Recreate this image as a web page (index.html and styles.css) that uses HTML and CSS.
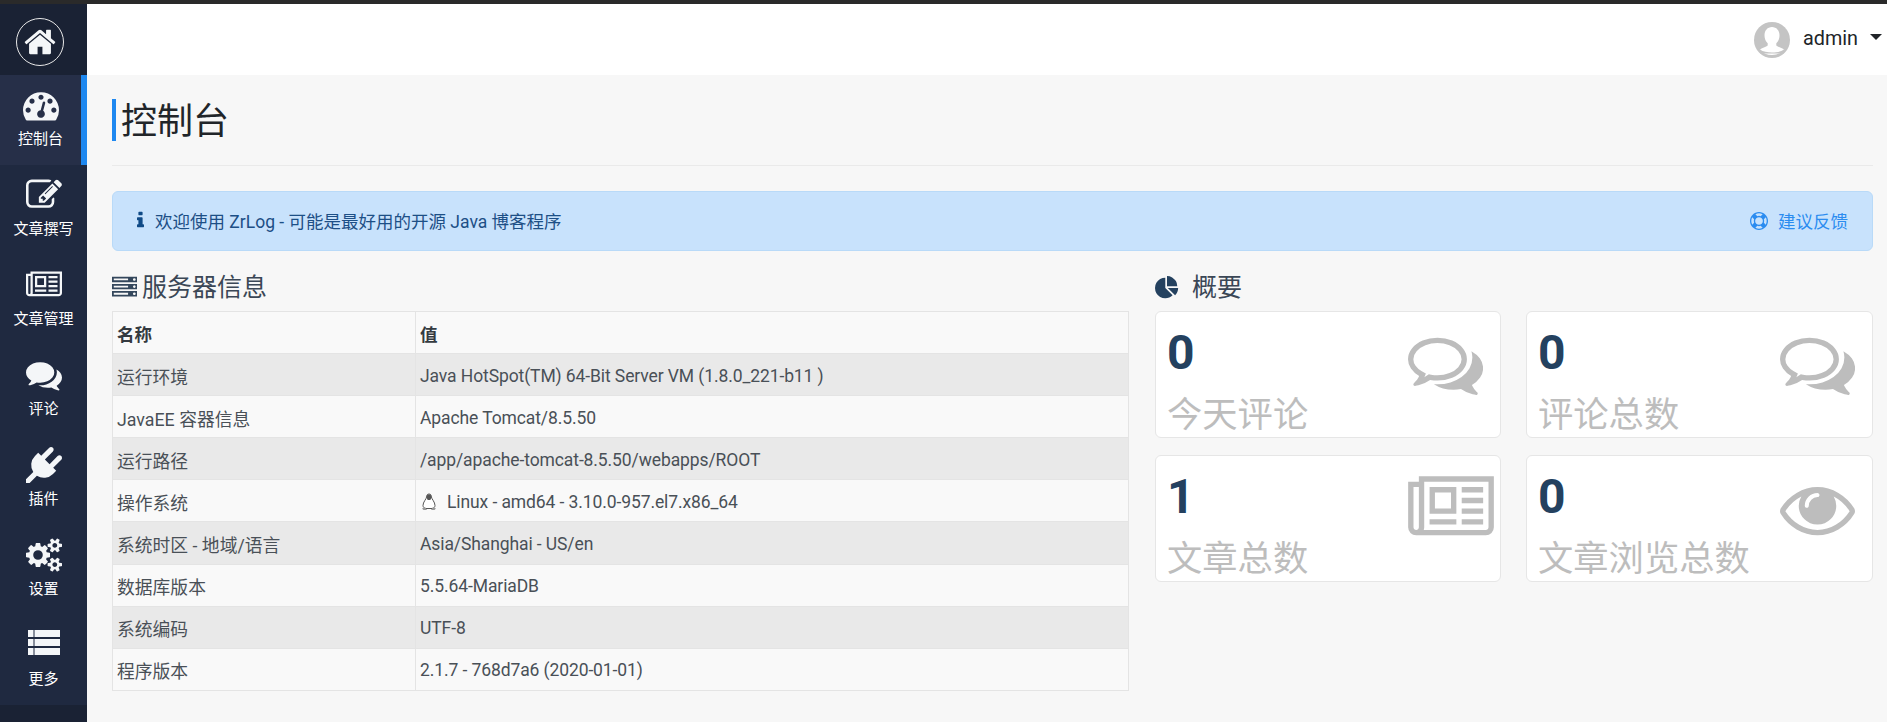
FILE: index.html
```html
<!DOCTYPE html>
<html lang="zh-CN">
<head>
<meta charset="utf-8">
<title>ZrLog 控制台</title>
<link rel="stylesheet" href="styles.css">
</head>
<body>
<div class="strip"></div>
<div class="app">
  <nav class="sidebar">
    <a class="logo"><span class="logo-ring"><svg class="logo-icon" viewBox="0 0 1792 1792"><path d="M1472 992v480q0 26-19 45t-45 19h-384v-384h-256v384h-384q-26 0-45-19t-19-45v-480q0-1 .5-3t.5-3l575-474 575 474q1 2 1 6zm223-69l-62 74q-8 9-21 11h-3q-13 0-21-7l-692-577-692 577q-12 8-24 7-13-2-21-11l-62-74q-8-10-7-23.5t11-21.5l719-599q32-26 76-26t76 26l244 204v-195q0-14 9-23t23-9h192q14 0 23 9t9 23v408l219 182q10 8 11 21.5t-7 23.5z"/></svg></span></a>
    <a class="nav-item active"><svg class="nav-icon" viewBox="0 0 1792 1792"><path d="M384 1152q0-53-37.500-90.500t-90.500-37.500-90.500 37.500-37.500 90.500 37.500 90.500 90.500 37.500 90.500-37.500 37.500-90.500zm192-448q0-53-37.500-90.500t-90.500-37.500-90.500 37.500-37.500 90.500 37.500 90.500 90.500 37.500 90.500-37.500 37.500-90.500zm428 481l101-382q6-26-7.500-48.500t-38.500-29.500-48 6.500-30 39.500l-101 382q-60 5-107 43.500t-63 98.500q-20 77 20 146t117 89 146-20 89-117q16-60-6-117t-72-91zm660-33q0-53-37.500-90.500t-90.500-37.500-90.500 37.500-37.500 90.500 37.500 90.500 90.500 37.500 90.500-37.500 37.500-90.500zm-640-640q0-53-37.500-90.500t-90.500-37.500-90.500 37.500-37.500 90.500 37.500 90.500 90.500 37.500 90.500-37.500 37.500-90.500zm448 192q0-53-37.500-90.500t-90.500-37.500-90.500 37.500-37.500 90.500 37.500 90.500 90.500 37.500 90.500-37.500 37.500-90.500zm320 448q0 261-141 483-19 29-54 29h-1402q-35 0-54-29-141-221-141-483 0-182 71-348t191-286 286-191 348-71 348 71 286 191 191 286 71 348z"/></svg><span>控制台</span></a>
    <a class="nav-item"><svg class="nav-icon" viewBox="0 0 1792 1792"><path d="M888 1184l116-116-152-152-116 116v56h96v96h56zm440-720q-16-16-33 1l-350 350q-17 17-1 33t33-1l350-350q17-17 1-33zm80 594v190q0 119-84.500 203.500t-203.500 84.500h-832q-119 0-203.500-84.500t-84.500-203.500v-832q0-119 84.500-203.500t203.500-84.500h832q63 0 117 25 15 7 18 23 3 17-9 29l-49 49q-14 14-32 8-23-6-45-6h-832q-66 0-113 47t-47 113v832q0 66 47 113t113 47h832q66 0 113-47t47-113v-126q0-13 9-22l64-64q15-15 35-7t20 29zm-96-738l288 288-672 672h-288v-288zm444 132l-92 92-288-288 92-92q28-28 68-28t68 28l152 152q28 28 28 68t-28 68z"/></svg><span>文章撰写</span></a>
    <a class="nav-item"><svg class="nav-icon" viewBox="0 0 2048 1792"><path d="M1024 512h-384v384h384v-384zm128 640v128h-640v-128h640zm0-768v640h-640v-640h640zm640 768v128h-512v-128h512zm0-256v128h-512v-128h512zm0-256v128h-512v-128h512zm0-256v128h-512v-128h512zm-1536 960v-960h-128v960q0 26 19 45t45 19 45-19 19-45zm1664 0v-1088h-1536v1088q0 33-11 64h1483q26 0 45-19t19-45zm128-1216v1216q0 80-56 136t-136 56h-1664q-80 0-136-56t-56-136v-1088h256v-128h1792z"/></svg><span>文章管理</span></a>
    <a class="nav-item"><svg class="nav-icon" viewBox="0 0 1792 1792"><path d="M1408 768q0 139-94 257t-256.500 186.500-353.500 68.500q-86 0-176-16-124 88-278 128-36 9-86 16h-3q-11 0-20.500-8t-11.500-21q-1-3-1-6.500t.5-6.500 2-6l2.500-5 3.500-5.500 4-5 4.500-5 4-4.500q5-6 23-25t26-29.500 22.500-29 25-38.500 20.500-44q-124-72-195-177t-71-224q0-139 94-257t256.500-186.500 353.500-68.500 353.500 68.500 256.500 186.500 94 257zm384 256q0 120-71 224.500t-195 176.500q10 24 20.500 44t25 38.500 22.500 29 26 29.500 23 25q1 1 4 4.500t4.500 5 4 5 3.500 5.500l2.500 5 2 6 .5 6.500-1 6.500q-3 14-13 22t-22 7q-50-7-86-16-154-40-278-128-90 16-176 16-271 0-472-132 58 4 88 4 161 0 309-45t264-129q125-92 192-212t67-254q0-77-23-152 129 71 204 178t75 230z"/></svg><span>评论</span></a>
    <a class="nav-item"><svg class="nav-icon" viewBox="0 0 1792 1792"><path d="M1755 453q37 38 37 90.500t-37 90.500l-401 400 150 150-160 160q-163 163-389.500 186.500t-411.500-100.500l-362 362h-181v-181l362-362q-124-185-100.500-411.500t186.500-389.500l160-160 150 150 400-401q38-37 91-37t90 37 37 90.500-37 90.500l-400 401 234 234 401-400q38-37 91-37t90 37z"/></svg><span>插件</span></a>
    <a class="nav-item"><svg class="nav-icon" viewBox="0 0 1920 1792"><path d="M896 896q0-106-75-181t-181-75-181 75-75 181 75 181 181 75 181-75 75-181zm768 512q0-52-38-90t-90-38-90 38-38 90q0 53 37.500 90.500t90.500 37.500 90.500-37.500 37.500-90.500zm0-1024q0-52-38-90t-90-38-90 38-38 90q0 53 37.500 90.500t90.500 37.500 90.500-37.500 37.500-90.500zm-384 421v185q0 10-7 19.500t-16 10.500l-155 24q-11 35-32 76 34 48 90 115 7 11 7 20 0 12-7 19-23 30-82.500 89.500t-78.500 59.500q-11 0-21-7l-115-90q-37 19-77 31-11 108-23 155-7 24-30 24h-186q-11 0-20-7.500t-10-17.500l-23-153q-34-10-75-31l-118 89q-7 7-20 7-11 0-21-8-144-133-144-160 0-9 7-19 10-14 41-53t47-61q-23-44-35-82l-152-24q-10-1-17-9.500t-7-19.500v-185q0-10 7-19.500t16-10.500l155-24q11-35 32-76-34-48-90-115-7-11-7-20 0-12 7-20 22-30 82-89t79-59q11 0 21 7l115 90q34-18 77-32 11-108 23-154 7-24 30-24h186q11 0 20 7.500t10 17.500l23 153q34 10 75 31l118-89q8-7 20-7 11 0 21 8 144 133 144 160 0 8-7 19-12 16-42 54t-45 60q23 48 34 82l152 23q10 2 17 10.500t7 19.500zm640 533v140q0 16-149 31-12 27-30 52 51 113 51 138 0 4-4 7-122 71-124 71-8 0-46-47t-52-68q-20 2-30 2t-30-2q-14 21-52 68t-46 47q-2 0-124-71-4-3-4-7 0-25 51-138-18-25-30-52-149-15-149-31v-140q0-16 149-31 13-29 30-52-51-113-51-138 0-4 4-7 4-2 35-20t59-34 30-16q8 0 46 46.500t52 67.500q20-2 30-2t30 2q51-71 92-112l6-2q4 0 124 70 4 3 4 7 0 25-51 138 17 23 30 52 149 15 149 31zm0-1024v140q0 16-149 31-12 27-30 52 51 113 51 138 0 4-4 7-122 71-124 71-8 0-46-47t-52-68q-20 2-30 2t-30-2q-14 21-52 68t-46 47q-2 0-124-71-4-3-4-7 0-25 51-138-18-25-30-52-149-15-149-31v-140q0-16 149-31 13-29 30-52-51-113-51-138 0-4 4-7 4-2 35-20t59-34 30-16q8 0 46 46.500t52 67.500q20-2 30-2t30 2q51-71 92-112l6-2q4 0 124 70 4 3 4 7 0 25-51 138 17 23 30 52 149 15 149 31z"/></svg><span>设置</span></a>
    <a class="nav-item"><svg class="nav-icon" viewBox="-2 -2 36 36"><path d="M0 1h5.500v7H0zM6.500 1H32v7H6.500zM0 10h5.500v7H0zM6.500 10H32v7H6.500zM0 19h5.500v7H0zM6.500 19H32v7H6.500z"/></svg><span>更多</span></a>
    <div class="side-foot"></div>
  </nav>
  <div class="main">
    <header class="topbar">
      <svg class="avatar" viewBox="0 0 36 36"><circle cx="18" cy="18" r="18" fill="#c4c4c4"/><path fill="#fff" d="M18 5c-4.500 0-7.500 3.500-7.500 8.500 0 3.200 1.300 6 3.200 7.800v2.200c-1.500 1.600-6 2.300-8 4.500 3 3 7.500 5 12.300 5s9.300-2 12.300-5c-2-2.200-6.500-2.900-8-4.500v-2.200c1.900-1.800 3.200-4.600 3.200-7.800C25.500 8.500 22.500 5 18 5z"/><path fill="#c4c4c4" d="M6 27.500c3 2.200 7.500 3 12 3s9-.8 12-3v4H6z"/></svg>
      <span class="user-name">admin</span>
      <span class="caret"></span>
    </header>
    <main class="content">
      <div class="page-head"><h1 class="page-title">控制台</h1></div>
      <div class="alert">
        <span class="alert-msg"><svg class="alert-icon" viewBox="0 0 640 1792"><path d="M640 1264v128q0 26-19 45t-45 19h-512q-26 0-45-19t-19-45v-128q0-26 19-45t45-19h64v-384h-64q-26 0-45-19t-19-45v-128q0-26 19-45t45-19h384q26 0 45 19t19 45v576h64q26 0 45 19t19 45zm-128-1152v192q0 26-19 45t-45 19h-256q-26 0-45-19t-19-45v-192q0-26 19-45t45-19h256q26 0 45 19t19 45z"/></svg>欢迎使用 ZrLog - 可能是最好用的开源 Java 博客程序</span>
        <a class="alert-link"><svg class="ring-icon" viewBox="0 0 1792 1792"><path d="M896 0q182 0 348 71t286 191 191 286 71 348-71 348-191 286-286 191-348 71-348-71-286-191-191-286-71-348 71-348 191-286 286-191 348-71zm0 128q-190 0-361 90l194 194q82-28 167-28t167 28l194-194q-171-90-361-90zm-678 1129l194-194q-28-82-28-167t28-167l-194-194q-90 171-90 361t90 361zm678 407q190 0 361-90l-194-194q-82 28-167 28t-167-28l-194 194q171 90 361 90zm0-384q159 0 271.500-112.500t112.500-271.500-112.500-271.500-271.500-112.500-271.500 112.500-112.500 271.500 112.500 271.500 271.500 112.500zm484-217l194 194q90-171 90-361t-90-361l-194 194q28 82 28 167t-28 167z"/></svg>建议反馈</a>
      </div>
      <div class="columns">
        <section>
          <h2 class="section-title"><svg class="server-icon" viewBox="0 0 1792 1792"><path d="M128 1408h1024v-128h-1024v128zm0-512h1024v-128h-1024v128zm1568 448q0-40-28-68t-68-28-68 28-28 68 28 68 68 28 68-28 28-68zm-1568-960h1024v-128h-1024v128zm1568 448q0-40-28-68t-68-28-68 28-28 68 28 68 68 28 68-28 28-68zm0-512q0-40-28-68t-68-28-68 28-28 68 28 68 68 28 68-28 28-68zm96 832v384h-1792v-384h1792zm0-512v384h-1792v-384h1792zm0-512v384h-1792v-384h1792z"/></svg>服务器信息</h2>
          <table class="info-table">
            <thead><tr><th class="col-name">名称</th><th>值</th></tr></thead>
            <tbody>
              <tr><td class="name">运行环境</td><td class="val">Java HotSpot(TM) 64-Bit Server VM (1.8.0_221-b11 )</td></tr>
              <tr><td class="name">JavaEE 容器信息</td><td class="val">Apache Tomcat/8.5.50</td></tr>
              <tr><td class="name">运行路径</td><td class="val">/app/apache-tomcat-8.5.50/webapps/ROOT</td></tr>
              <tr><td class="name">操作系统</td><td class="val"><svg class="tux" viewBox="0 0 16 18"><path fill="#fff" stroke="#555" stroke-width="1" d="M8 1C6.200 1 5.600 2.500 5.600 4c-.2 2-3.600 5-3.600 8.500 0 1.500 1 2.500 2.500 3h7c1.500-.5 2.500-1.500 2.500-3C14 9 10.600 6 10.400 4 10.400 2.500 9.800 1 8 1z"/><path fill="#555" d="M6.200 1.500h3.600l.5 3.500-1 2H6.700l-1-2z"/><path fill="#999" d="M1 15.500l3-1.500 2 3H2.500zM15 15.500L12 14l-2 3h3.500z"/></svg>Linux - amd64 - 3.10.0-957.el7.x86_64</td></tr>
              <tr><td class="name">系统时区 - 地域/语言</td><td class="val">Asia/Shanghai - US/en</td></tr>
              <tr><td class="name">数据库版本</td><td class="val">5.5.64-MariaDB</td></tr>
              <tr><td class="name">系统编码</td><td class="val">UTF-8</td></tr>
              <tr><td class="name">程序版本</td><td class="val">2.1.7 - 768d7a6 (2020-01-01)</td></tr>
            </tbody>
          </table>
        </section>
        <section>
          <h2 class="section-title"><svg class="pie-icon" viewBox="0 0 1792 1792"><path d="M768 890l546 546q-106 108-247.500 168t-298.500 60q-209 0-385.500-103t-279.500-279.500-103-385.500 103-385.500 279.500-279.500 385.500-103v762zm187 6h773q0 157-60 298.500t-168 247.500zm709-128h-768v-768q209 0 385.500 103t279.500 279.500 103 385.500z"/></svg>概要</h2>
          <div class="cards">
            <div class="card"><div class="card-text"><div class="card-num">0</div><div class="card-label">今天评论</div></div><svg class="card-icon" viewBox="0 0 1792 1792"><use href="#comments-o"/></svg></div>
            <div class="card"><div class="card-text"><div class="card-num">0</div><div class="card-label">评论总数</div></div><svg class="card-icon" viewBox="0 0 1792 1792"><use href="#comments-o"/></svg></div>
            <div class="card"><div class="card-text"><div class="card-num">1</div><div class="card-label">文章总数</div></div><svg class="card-icon wide" viewBox="0 0 2048 1792"><path d="M1024 512h-384v384h384v-384zm128 640v128h-640v-128h640zm0-768v640h-640v-640h640zm640 768v128h-512v-128h512zm0-256v128h-512v-128h512zm0-256v128h-512v-128h512zm0-256v128h-512v-128h512zm-1536 960v-960h-128v960q0 26 19 45t45 19 45-19 19-45zm1664 0v-1088h-1536v1088q0 33-11 64h1483q26 0 45-19t19-45zm128-1216v1216q0 80-56 136t-136 56h-1664q-80 0-136-56t-56-136v-1088h256v-128h1792z"/></svg></div>
            <div class="card"><div class="card-text"><div class="card-num">0</div><div class="card-label">文章浏览总数</div></div><svg class="card-icon" viewBox="0 0 1792 1792"><path d="M1664 960q-152-236-381-353 61 104 61 225 0 185-131.500 316.500t-316.500 131.500-316.500-131.500-131.500-316.500q0-121 61-225-229 117-381 353 133 205 333.500 326.500t434.500 121.500 434.500-121.500 333.500-326.500zm-720-384q0-20-14-34t-34-14q-125 0-214.500 89.500t-89.500 214.500q0 20 14 34t34 14 34-14 14-34q0-86 61-147t147-61q20 0 34-14t14-34zm848 384q0 34-20 69-140 230-376.500 368.500t-499.500 138.500-499.500-139-376.500-368q-20-35-20-69t20-69q140-229 376.500-368t499.500-139 499.500 139 376.500 368q20 35 20 69z"/></svg></div>
          </div>
        </section>
      </div>
    </main>
  </div>
</div>
<svg class="defs" width="0" height="0"><defs><path id="comments-o" d="M704 384q-153 0-286 52t-211.500 141-78.500 191q0 82 53 158t149 132l97 56-35 84q34-20 62-39l44-31 53 10q78 14 153 14 153 0 286-52t211.500-141 78.500-191-78.500-191-211.500-141-286-52zm0-128q191 0 353.500 68.500t256.500 186.500 94 257-94 257-256.500 186.500-353.500 68.500q-86 0-176-16-124 88-278 128-36 9-86 16h-3q-11 0-20.500-8t-11.500-21q-1-3-1-6.500t.5-6.500 2-6l2.500-5 3.500-5.500 4-5 4.500-5 4-4.500q5-6 23-25t26-29.500 22.500-29 25-38.500 20.500-44q-124-72-195-177t-71-224q0-139 94-257t256.500-186.500 353.500-68.500zm824 1130q10 24 20.500 44t25 38.500 22.500 29 26 29.500 23 25q1 1 4 4.500t4.500 5 4 5 3.500 5.500l2.500 5 2 6 .5 6.500-1 6.500q-3 14-13 22t-22 7q-50-7-86-16-154-40-278-128-90 16-176 16-271 0-472-132 58 4 88 4 161 0 309-45t264-129q125-92 192-212t67-254q0-77-23-152 129 71 204 178t75 230q0 120-71 224.500t-195 176.500z"/></defs></svg>
</body>
</html>
```
FILE: styles.css
```css
* { box-sizing: border-box; }
html, body { height: 100%; }
body {
  margin: 0;
  height: 722px;
  overflow: hidden;
  display: flex;
  flex-direction: column;
  background: #f7f7f7;
  font-family: Roboto, "Noto Sans CJK SC", sans-serif;
  color: #495057;
}
.defs { position: absolute; }
.strip { height: 4px; background: #2a2a2a; flex: none; }
.app { flex: 1; display: flex; min-height: 0; }

.sidebar {
  width: 87px;
  flex: none;
  display: flex;
  flex-direction: column;
  background: #1f2940;
  color: #fff;
}
.logo {
  height: 71px;
  flex: none;
  padding: 5px 8px 0 0;
  display: flex;
  align-items: center;
  justify-content: center;
  background: #1a2234;
}
.logo-ring {
  width: 48px;
  height: 48px;
  border: 1.5px solid #e8e8e8;
  border-radius: 50%;
  display: flex;
  align-items: center;
  justify-content: center;
}
.logo-icon { width: 34px; height: 34px; fill: #f4f6f8; }
.nav-item {
  height: 90px;
  flex: none;
  display: flex;
  flex-direction: column;
  align-items: center;
  padding-top: 12px;
  font-size: 15px;
  line-height: 20px;
  color: #fff;
}
.nav-item span { margin-top: 6px; }
.nav-item.active {
  background: #262f48;
  border-right: 6px solid #1e88f0;
}
.nav-icon { height: 36px; width: 36px; fill: #f4f6f8; }
.side-foot { flex: 1; background: #1a2234; }

.main { flex: 1; min-width: 0; display: flex; flex-direction: column; }
.topbar {
  height: 71px;
  flex: none;
  background: #fff;
  display: flex;
  align-items: center;
  justify-content: flex-end;
  padding-right: 5px;
  color: #212529;
}
.avatar { width: 36px; height: 36px; margin-right: 13px; }
.user-name { font-size: 19.8px; line-height: 24px; margin: 0 12px 2px 0; }
.caret {
  width: 0;
  height: 0;
  margin-bottom: 6px;
  border-left: 6px solid transparent;
  border-right: 6px solid transparent;
  border-top: 6px solid #212529;
}
.content { padding: 24px 14px 0 25px; }
.page-head {
  height: 67px;
  border-bottom: 1px solid #eaeaea;
}
.page-title {
  margin: 0;
  height: 42px;
  border-left: 4px solid #1e88f0;
  padding: 2px 0 0 5px;
  font-size: 36px;
  line-height: 42px;
  font-weight: 400;
  color: #212529;
}
.alert {
  margin-top: 25px;
  height: 60px;
  padding: 0 24px 1px 24px;
  background: #c8e2fc;
  border: 1px solid #b9daf8;
  border-radius: 6px;
  display: flex;
  align-items: center;
  justify-content: space-between;
  font-size: 17.5px;
  color: #1d4f86;
}
.alert-msg, .alert-link { display: flex; align-items: center; }
.alert-icon { width: 7px; height: 20px; margin-right: 11px; fill: #0f4a86; }
.alert-link { color: #2b8cf0; }
.ring-icon { width: 18px; height: 18px; margin-right: 10px; fill: #2b8cf0; }

.columns {
  display: grid;
  grid-template-columns: 1017px 718px;
  column-gap: 26px;
  margin-top: 16px;
}
.section-title {
  margin: 0 0 3px;
  height: 41px;
  display: flex;
  align-items: center;
  font-size: 25px;
  line-height: 36px;
  font-weight: 400;
  color: #3b4756;
}
.server-icon { width: 25px; height: 25px; margin-right: 5px; fill: #34475c; }
.pie-icon { width: 24px; height: 24px; margin-right: 13px; fill: #24415f; }
.info-table {
  width: 100%;
  border-collapse: collapse;
  table-layout: fixed;
  font-size: 17.5px;
}
.info-table th, .info-table td {
  height: 42.1px;
  padding: 2px 4px 0;
  border: 1px solid #e4e4e4;
  text-align: left;
  white-space: nowrap;
}
.info-table .name { font-size: 17.8px; }
.info-table .val { letter-spacing: -0.1px; }
.info-table th { font-weight: 700; color: #343a40; background: #f9f9f9; }
.col-name { width: 303px; }
.info-table tbody tr:nth-child(odd) td { background: #e9e9e9; }
.info-table tbody tr:nth-child(even) td { background: #f9f9f9; }
.tux { width: 16px; height: 18px; margin: 0 10px 0 1px; vertical-align: -3px; }

.cards {
  display: grid;
  grid-template-columns: 346px 347px;
  grid-auto-rows: 127px;
  column-gap: 25px;
  row-gap: 17px;
}
.card {
  background: #fff;
  border: 1px solid #e6e6e6;
  border-radius: 6px;
  display: flex;
  align-items: flex-start;
  overflow: hidden;
}
.card-text { flex: 1; padding: 12px 0 0 11px; }
.card-num {
  font-size: 48px;
  line-height: 58px;
  font-weight: 700;
  color: #24415f;
}
.card-label {
  margin-top: 9px;
  font-size: 35.3px;
  line-height: 48px;
  color: #bdbdbd;
  white-space: nowrap;
}
.card-icon { width: 86px; height: 75px; margin: 15px 6px 0 0; fill: #bdbdbd; }
.card-icon:not(.wide) { width: 75px; margin-right: 17px; }
```
